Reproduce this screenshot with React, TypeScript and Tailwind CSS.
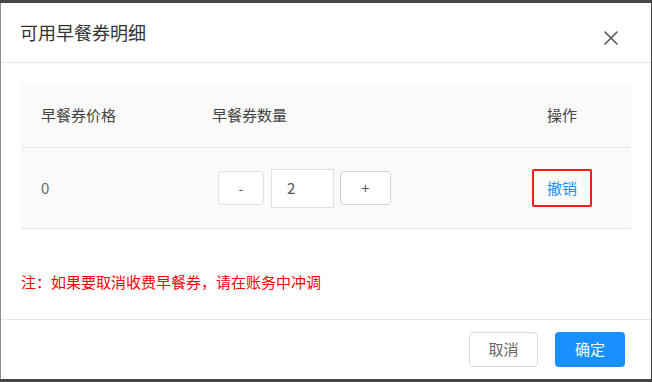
import React from "react";

const font = { fontFamily: '"Noto Sans CJK SC", "Liberation Sans", sans-serif' };

const CloseIcon: React.FC = () => (
  <svg width="14" height="14" viewBox="0 0 14 14" className="block">
    <path d="M1 1L13 13M13 1L1 13" stroke="#555" strokeWidth="1.6" strokeLinecap="round" />
  </svg>
);

const App: React.FC = () => (
  <div className="w-[652px] h-[382px] bg-[#464646] pt-[3px] overflow-hidden" style={font}>
    <div className="w-[651px] h-[376px] bg-white border-l border-[#8c8c8c] flex flex-col">
      {/* header */}
      <div className="h-[60px] border-b border-[#e8e8e8] flex justify-between pl-[19px] pr-[33px]">
        <div className="text-[18px] leading-[24px] text-[#333] pt-[17px]">可用早餐券明细</div>
        <div className="pt-[28px]">
          <CloseIcon />
        </div>
      </div>

      {/* body */}
      <div className="flex-1 pt-5 px-5">
        <div className="bg-[#fafafa] text-[15px]">
          <div className="grid grid-cols-[171px_1fr_138px] h-[65px] items-center border-b border-[#e8e8e8] text-[#444]">
            <div className="pl-5">早餐券价格</div>
            <div className="pl-5">早餐券数量</div>
            <div className="text-center">操作</div>
          </div>
          <div className="grid grid-cols-[171px_1fr_138px] h-[81px] items-center border-b border-[#e8e8e8]">
            <div className="pl-5 text-[#666]">0</div>
            <div className="pl-[26px] flex items-center">
              <button className="w-[46px] h-[34px] border border-[#dcdfe6] rounded-[4px] bg-white text-[#555] text-[14px]">
                -
              </button>
              <div className="ml-[7px] w-[63px] h-[39px] border border-[#dcdfe6] bg-white text-[#555] flex items-center pl-[15px]">
                2
              </div>
              <button className="ml-[6px] w-[51px] h-[34px] border border-[#c8d4e0] rounded-[4px] bg-white text-[#555] text-[14px]">
                +
              </button>
            </div>
            <div className="flex justify-center">
              <div className="w-[60px] h-[38px] border-2 border-[#ff1a1a] rounded-[2px] flex items-center justify-center text-[#1890ff]">
                撤销
              </div>
            </div>
          </div>
        </div>
        <div className="mt-[43px] text-[15px] leading-[20px] text-[#ff0000]">
          注：如果要取消收费早餐券，请在账务中冲调
        </div>
      </div>

      {/* footer */}
      <div className="h-[60px] border-t border-[#e8e8e8] flex items-center justify-end pr-[26px] gap-[17px]">
        <button className="w-[69px] h-[35px] border border-[#d9d9d9] rounded-[4px] bg-white text-[#666] text-[15px]">
          取消
        </button>
        <button className="w-[70px] h-[35px] rounded-[4px] bg-[#1890ff] text-white text-[15px]">
          确定
        </button>
      </div>
    </div>
  </div>
);

export default App;
